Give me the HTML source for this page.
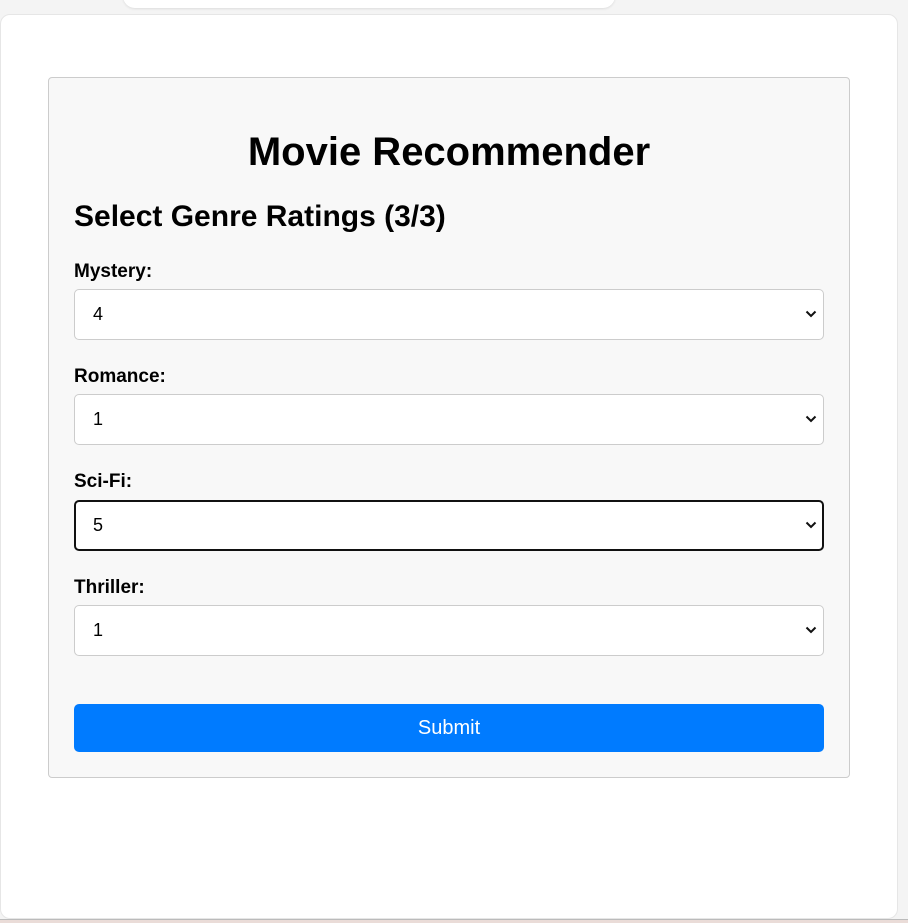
<!DOCTYPE html>
<html><head><style>
body{margin:0;width:908px;height:922px;background:#f4f4f4;font-family:"Liberation Sans",Arial,sans-serif;position:relative;overflow:hidden}
.top{position:absolute;left:123px;top:-10px;width:492px;height:18px;background:#fff;border-radius:0 0 12px 12px;box-shadow:0 1px 2px #ddd}
.card{position:absolute;left:0;top:14px;width:898px;height:905px;background:#fff;border:1px solid #e6e6e6;border-radius:10px;box-sizing:border-box}
.bot{position:absolute;left:0;top:919px;width:908px;height:3px;background:#eadcd8;border-top:1px solid #bbb}
.panel{position:absolute;left:48px;top:77px;width:802px;height:701px;background:#f8f8f8;border:1px solid #ccc;border-radius:4px;box-sizing:border-box}
h1{position:absolute;left:48px;width:802px;top:130px;margin:0;text-align:center;font-size:40px;line-height:44px}
h2{position:absolute;left:74px;top:200px;margin:0;font-size:30px;line-height:34px}
.lab{position:absolute;left:74px;font-size:19px;font-weight:bold;line-height:20px}
.sel{position:absolute;left:74px;width:750px;height:51px;background:#fff;border:1px solid #ccc;border-radius:5px;box-sizing:border-box;font-size:18px;line-height:49px;padding-left:18px}
.sel svg{position:absolute;right:6px;top:20px}
.foc{border:2px solid #111;line-height:47px;padding-left:17px}
.foc svg{right:5px;top:19px}
.btn{position:absolute;left:74px;top:704px;width:750px;height:48px;background:#007bff;border-radius:5px;color:#fff;font-size:20px;text-align:center;line-height:48px}
</style></head><body>
<div class="top"></div>
<div class="card"></div>
<div class="bot"></div>
<div class="panel"></div>
<h1>Movie Recommender</h1>
<h2>Select Genre Ratings (3/3)</h2>
<div class="lab" style="top:262px">Mystery:</div>
<div class="sel" style="top:289px">4<svg width="12" height="8" viewBox="0 0 12 8"><path d="M1.5 1.5L6 6L10.5 1.5" stroke="#111" stroke-width="2" fill="none"/></svg></div>
<div class="lab" style="top:367px">Romance:</div>
<div class="sel" style="top:394px">1<svg width="12" height="8" viewBox="0 0 12 8"><path d="M1.5 1.5L6 6L10.5 1.5" stroke="#111" stroke-width="2" fill="none"/></svg></div>
<div class="lab" style="top:472px">Sci-Fi:</div>
<div class="sel foc" style="top:500px">5<svg width="12" height="8" viewBox="0 0 12 8"><path d="M1.5 1.5L6 6L10.5 1.5" stroke="#111" stroke-width="2" fill="none"/></svg></div>
<div class="lab" style="top:578px">Thriller:</div>
<div class="sel" style="top:605px">1<svg width="12" height="8" viewBox="0 0 12 8"><path d="M1.5 1.5L6 6L10.5 1.5" stroke="#111" stroke-width="2" fill="none"/></svg></div>
<div class="btn">Submit</div>
</body></html>
